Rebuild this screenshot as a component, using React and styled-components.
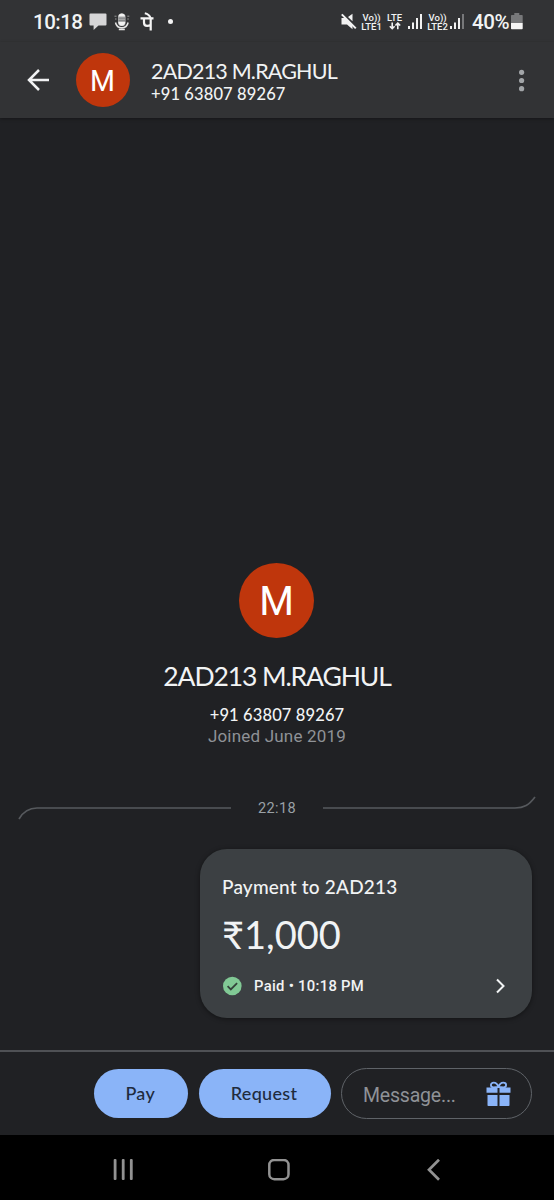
import React from 'react';
import styled, { createGlobalStyle } from 'styled-components';

const GlobalStyle = createGlobalStyle`
    * {
        box-sizing: border-box;
    }

    body {
        margin: 0;
        background: #202124;
    }
`;

const contact = {
    initial: 'M',
    name: '2AD213 M.RAGHUL',
    phone: '+91 63807 89267',
    joined: 'Joined June 2019',
};

const BubbleIcon = () => (
    <svg width="18" height="18" viewBox="0 0 18 18">
        <path d="M1.500 0.500h15a1 1 0 0 1 1 1v10a1 1 0 0 1-1 1H9.500L4.600 17v-4.500H1.500a1 1 0 0 1-1-1v-10a1 1 0 0 1 1-1z" fill="#d6d6d7" />
    </svg>
);

const MicIcon = () => (
    <svg width="16" height="18" viewBox="0 0 16 18" fill="none">
        <rect x="4" y="0.500" width="7.600" height="12.500" rx="3.600" fill="#a9aaab" />
        <path d="M4.500 3.400C5 1.400 6 0.600 7.800 0.600s2.800 0.800 3.300 2.800zM4.300 9h7c-0.400 2.600-1.700 3.700-3.500 3.700S4.700 11.600 4.300 9z" fill="#f2f2f2" />
        <path d="M4.500 5.200h6.600M4.500 7.400h6.600" stroke="#808284" strokeWidth="1" />
        <path d="M1.500 9.500c0.800 3.800 3 5.300 6.300 5.300s5.500-1.500 6.300-5.300M4.800 16.500h6" stroke="#e6e6e6" strokeWidth="1.500" />
        <path d="M0.500 3.200h2M13.300 3.200h2M1 6h1.500M13.300 6h1.500" stroke="#999" strokeWidth="1" />
    </svg>
);

const PhonePeIcon = () => (
    <svg width="14" height="20" viewBox="0 0 14 20" fill="none" stroke="#f4f4f4" strokeWidth="2.200">
        <path d="M0.500 6.300h13M10.700 6.300v12.200M4 6.300v4.200c0 2.400 1.100 3.400 3.100 3.400 1.300 0 2.500-.3 3.600-.9" />
        <path d="M4.800 1.300c2.900 0.600 4.900 2.200 5.900 5" strokeWidth="2" />
    </svg>
);

const MutedIcon = () => (
    <svg width="16" height="17" viewBox="0 0 16 17">
        <path d="M11.500 0.800v7.400L7 4zM0.500 5h3.400l7.600 7.700v3.500L6 11.500H0.500z" fill="#f2f2f2" />
        <path d="M0.800 1.400l14 14" stroke="#f2f2f2" strokeWidth="2" />
    </svg>
);

const Signal = ({ weak }) => (
    <svg width="15" height="17" viewBox="0 0 15 17" fill="#f2f2f2">
        <rect x="0" y="13" width="2" height="3" />
        <rect x="4" y="9.500" width="2" height="6.500" />
        <rect x="8" y="5" width="2" height="11" />
        <rect x="12" y="1" width="2" height="15" fill={weak ? '#77787a' : '#f2f2f2'} />
    </svg>
);

const DataArrows = () => (
    <svg width="12" height="8" viewBox="0 0 12 8" fill="none" stroke="#f2f2f2" strokeWidth="1.600">
        <path d="M3.200 0.500v6M0.800 4.300l2.400 2.400 2.400-2.400M8.800 7.300V1.300M6.400 3.500l2.400-2.400 2.400 2.400" />
    </svg>
);

const BatteryIcon = () => (
    <svg width="12" height="17" viewBox="0 0 12 17">
        <path d="M3.300 0h5v2H11a0.700 0.700 0 0 1 .7.7V10H0V2.700A0.700 0.700 0 0 1 .7 2h2.600z" fill="#77787a" />
        <path d="M0 10h11.700v5.600a0.700 0.700 0 0 1-.7.7H.7a0.700 0.700 0 0 1-.7-.7z" fill="#f5f5f5" />
    </svg>
);

const BackArrow = () => (
    <svg width="22" height="22" viewBox="0 0 22 22" fill="none" stroke="#f1f2f3" strokeWidth="2.500">
        <path d="M22 11H2M12 1L2 11l10 10" />
    </svg>
);

const MoreIcon = () => (
    <svg width="6" height="23" viewBox="0 0 6 23" fill="#a2a5a8">
        <circle cx="2.600" cy="3.300" r="2.600" />
        <circle cx="2.600" cy="11.500" r="2.600" />
        <circle cx="2.600" cy="19.700" r="2.600" />
    </svg>
);

const PaidIcon = () => (
    <svg width="20" height="20" viewBox="0 0 20 20">
        <circle cx="10.300" cy="10" r="9.300" fill="#81c995" />
        <path d="M5.600 10.200l3.200 3.200 6.300-6.300" fill="none" stroke="#34423b" strokeWidth="1.800" />
    </svg>
);

const Chevron = () => (
    <svg width="10" height="16" viewBox="0 0 10 16" fill="none" stroke="#f1f3f4" strokeWidth="2">
        <path d="M1 1.500L7.500 8 1 14.500" />
    </svg>
);

const GiftIcon = () => (
    <svg width="25" height="26" viewBox="0 0 25 26" fill="#8ab4f8">
        <path d="M0.500 6.500h11v5.300h-11zM13.500 6.500h11v5.300h-11zM1.500 14h10v11H2.300a0.800 0.800 0 0 1-.8-.8zM13.500 14h10v10.200a0.800 0.800 0 0 1-.8.8h-9.200z" />
        <path d="M12.500 6C11.500 3 9.700 1.600 7.700 1.600 5.900 1.600 4.900 2.700 4.900 4S6 6.300 7.500 6.300zM12.500 6c1-3 2.800-4.400 4.800-4.400 1.800 0 2.800 1.100 2.800 2.400S19 6.300 17.500 6.300z" fill="none" stroke="#8ab4f8" strokeWidth="1.800" />
    </svg>
);

const App = () => {
    return (
        <Screen>
            <GlobalStyle />
            <StatusBar>
                <Clock>10:18</Clock>
                <StatusLeft>
                    <BubbleIcon />
                    <MicIcon />
                    <PhonePeIcon />
                    <Dot />
                </StatusLeft>
                <StatusRight>
                    <MutedIcon />
                    <Network>
                        <span>Vo))</span>
                        <span>LTE1</span>
                    </Network>
                    <Network $narrow>
                        <span>LTE</span>
                        <DataArrows />
                    </Network>
                    <Signal />
                    <Network>
                        <span>Vo))</span>
                        <span>LTE2</span>
                    </Network>
                    <Signal weak />
                    <Percent>40%</Percent>
                    <BatteryIcon />
                </StatusRight>
            </StatusBar>
            <Header>
                <BackArrow />
                <Avatar $size={54}>{contact.initial}</Avatar>
                <HeaderText>
                    <HeaderName>{contact.name}</HeaderName>
                    <Phone>{contact.phone}</Phone>
                </HeaderText>
                <MoreIcon />
            </Header>
            <Conversation>
                <Avatar $size={75}>{contact.initial}</Avatar>
                <ProfileName>{contact.name}</ProfileName>
                <Phone>{contact.phone}</Phone>
                <Joined>{contact.joined}</Joined>
                <TimeDivider>
                    <svg width="214" height="24" viewBox="0 0 214 24" fill="none" stroke="#56595d" strokeWidth="1.700">
                        <path d="M1 23C5 16 11 12 19 12H213" />
                    </svg>
                    <Time>22:18</Time>
                    <svg width="213" height="24" viewBox="0 0 213 24" fill="none" stroke="#56595d" strokeWidth="1.700">
                        <path d="M0 12H192C201 12 206 9 212 1" />
                    </svg>
                </TimeDivider>
                <PaymentCard>
                    <CardTitle>Payment to 2AD213</CardTitle>
                    <Amount>₹1,000</Amount>
                    <PaidRow>
                        <PaidIcon />
                        <PaidText>Paid • 10:18 PM</PaidText>
                        <Chevron />
                    </PaidRow>
                </PaymentCard>
            </Conversation>
            <Footer>
                <ActionButton $width={94.5}>Pay</ActionButton>
                <ActionButton $width={132}>Request</ActionButton>
                <MessageField>
                    <span>Message...</span>
                    <GiftIcon />
                </MessageField>
            </Footer>
            <NavBar>
                <svg width="20" height="22" viewBox="0 0 20 22" fill="#929292">
                    <rect x="0.700" y="0" width="2.800" height="21" rx="1" />
                    <rect x="8.800" y="0" width="2.800" height="21" rx="1" />
                    <rect x="16.900" y="0" width="2.800" height="21" rx="1" />
                </svg>
                <svg width="22" height="22" viewBox="0 0 22 22" fill="none" stroke="#929292" strokeWidth="2.500">
                    <rect x="1.300" y="1" width="19.200" height="19.200" rx="5" />
                </svg>
                <svg width="13" height="22" viewBox="0 0 13 22" fill="none" stroke="#929292" strokeWidth="2.700">
                    <path d="M12 0.700L2 10.700l10 10" />
                </svg>
            </NavBar>
        </Screen>
    );
};

const Screen = styled.div`
    display: flex;
    flex-direction: column;
    width: 554px;
    height: 1200px;
    background: #202124;
    color: #f1f3f4;
    font-family: Roboto, sans-serif;
    overflow: hidden;

    svg {
        display: block;
        flex-shrink: 0;
    }
`;

const StatusBar = styled.div`
    display: flex;
    align-items: center;
    height: 42px;
    padding: 1px 31px 0 33px;
    background: #323335;
`;

const Clock = styled.span`
    width: 56px;
    font-size: 20.5px;
    font-weight: 500;
    letter-spacing: -0.5px;
`;

const StatusLeft = styled.div`
    display: flex;
    align-items: center;
    gap: 7px;

    svg:nth-child(3) {
        margin-left: 3px;
    }
`;

const Dot = styled.span`
    width: 5px;
    height: 5px;
    margin-left: 7px;
    border-radius: 50%;
    background: #f4f4f4;
`;

const StatusRight = styled.div`
    display: flex;
    align-items: center;
    margin-left: auto;
`;

const Network = styled.div`
    display: flex;
    flex-direction: column;
    align-items: center;
    width: ${({ $narrow }) => ($narrow ? '17px' : '21px')};
    margin-left: ${({ $narrow }) => ($narrow ? '2px' : '5px')};
    margin-right: ${({ $narrow }) => ($narrow ? '5px' : '2px')};
    font-size: 9.5px;
    font-weight: 500;
    line-height: 9px;
    letter-spacing: 0.1px;

    span {
        height: 9px;
    }

    ${({ $narrow }) => !$narrow && 'svg + & { margin-left: 4px; }'}
`;

const Percent = styled.span`
    margin: 0 2px 0 7px;
    font-size: 20.5px;
    font-weight: 500;
    letter-spacing: -0.5px;
`;

const Header = styled.header`
    display: flex;
    align-items: center;
    height: 76px;
    padding: 0 29px 0 27px;
    background: #323335;
    box-shadow: 0 1px 3px rgba(0, 0, 0, 0.35);
`;

const Avatar = styled.div`
    display: flex;
    align-items: center;
    justify-content: center;
    width: ${({ $size }) => $size}px;
    height: ${({ $size }) => $size}px;
    padding-top: 2px;
    border-radius: 50%;
    background: #bf360c;
    color: #fff;
    font-size: ${({ $size }) => $size * 0.53}px;

    ${Header} & {
        margin-left: 26.5px;
    }

    ${() => Conversation} & {
        margin-right: 1px;
    }
`;

const HeaderText = styled.div`
    flex: 1;
    margin-left: 21.5px;
    padding-top: 1px;
`;

const HeaderName = styled.div`
    font-family: Lato, sans-serif;
    font-size: 21.5px;
    line-height: 26px;
    letter-spacing: -0.8px;
`;

const Phone = styled.div`
    font-family: Lato, sans-serif;
    font-size: 16.5px;
    font-weight: 500;
    line-height: 20px;
    letter-spacing: 0.12px;
`;

const Conversation = styled.main`
    display: flex;
    flex: 1;
    flex-direction: column;
    align-items: center;
    padding: 445px 18px 0;
`;

const ProfileName = styled.h1`
    margin: 22px 0 13px;
    font-family: Lato, sans-serif;
    font-size: 26.5px;
    font-weight: 400;
    line-height: 32px;
    letter-spacing: -1.1px;
`;

const Joined = styled.div`
    color: #8f9297;
    font-size: 17px;
    line-height: 22px;
    letter-spacing: 0.2px;
`;

const TimeDivider = styled.div`
    display: flex;
    align-items: center;
    justify-content: space-between;
    width: 518px;
    margin-top: 49px;
`;

const Time = styled.span`
    margin-right: 1px;
    color: #9aa0a6;
    font-size: 14.5px;
    letter-spacing: 0.4px;
`;

const PaymentCard = styled.section`
    align-self: flex-end;
    width: 332px;
    height: 169px;
    margin: 29px 4px 0 0;
    padding: 26px 26px 0 22px;
    border-radius: 27px;
    background: #3c4043;
    box-shadow: 0 1px 5px rgba(0, 0, 0, 0.45);
`;

const CardTitle = styled.h2`
    margin: 0;
    font-family: Lato, sans-serif;
    font-size: 19px;
    font-weight: 500;
    line-height: 24px;
    letter-spacing: 0.2px;
`;

const Amount = styled.div`
    margin: 12px 0 19px;
    font-family: Lato, sans-serif;
    font-size: 38px;
    line-height: 46px;
`;

const PaidRow = styled.div`
    display: flex;
    align-items: center;
    height: 20px;
`;

const PaidText = styled.span`
    flex: 1;
    margin-left: 12px;
    font-size: 14.8px;
    font-weight: 500;
    letter-spacing: 0.3px;
`;

const Footer = styled.footer`
    display: flex;
    align-items: center;
    justify-content: flex-end;
    gap: 10.5px;
    height: 85px;
    padding: 0 22px 0 0;
    border-top: 2px solid #4f5155;
`;

const ActionButton = styled.button`
    width: ${({ $width }) => $width}px;
    height: 49px;
    padding: 0 1px 2px 0;
    border: 0;
    border-radius: 25px;
    background: #8ab4f8;
    color: #202b3d;
    font-family: Lato, sans-serif;
    font-size: 18px;
    font-weight: 500;
    letter-spacing: 0.3px;
`;

const MessageField = styled.div`
    display: flex;
    align-items: center;
    justify-content: space-between;
    width: 191px;
    height: 51px;
    padding: 3px 20px 0 21px;
    border: 1.5px solid #5f6368;
    border-radius: 26px;
    color: #8f9297;
    font-size: 19.5px;
    letter-spacing: -0.2px;

    svg {
        margin-top: -3px;
    }
`;

const NavBar = styled.nav`
    display: flex;
    align-items: center;
    justify-content: space-between;
    height: 65px;
    padding: 4px 114px 0 113px;
    background: #000;

    svg:nth-child(2) {
        margin-right: 3px;
    }
`;

export default App;
